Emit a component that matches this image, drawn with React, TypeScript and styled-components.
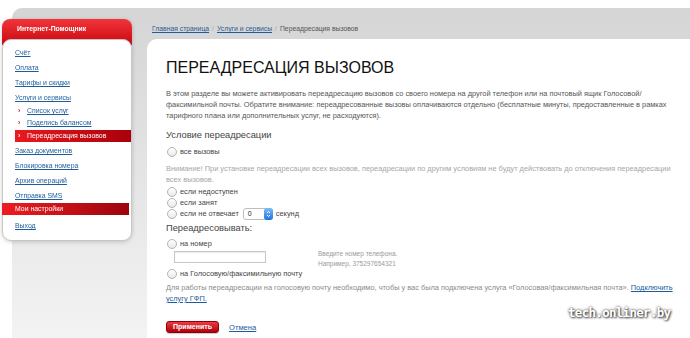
import styled, { createGlobalStyle } from "styled-components";

const GlobalStyle = createGlobalStyle`
  html, body {
    margin: 0;
    padding: 0;
    background: #fff;
  }
  body {
    font-family: "Liberation Sans", Arial, Helvetica, sans-serif;
  }
  * {
    box-sizing: border-box;
  }
`;

const Page = styled.div`
  position: relative;
  width: 690px;
  height: 338px;
  overflow: hidden;
  padding-top: 8px;
  background: #fff;
`;

const Frame = styled.div`
  display: flex;
  align-items: flex-start;
  height: 330px;
  margin-left: 12px;
  border-top-left-radius: 10px;
  background: linear-gradient(#d5d5d5, #e2e2e2 140px, #f3f3f3);
`;

const Sidebar = styled.nav`
  flex: none;
  width: 130px;
  margin: 11px 0 0 -10px;
  filter: drop-shadow(0 1px 2px rgba(0, 0, 0, 0.18));
`;

const SideHead = styled.div`
  height: 26px;
  padding: 5px 0 0 15px;
  border-radius: 8px 8px 0 0;
  background: linear-gradient(#f2353b, #c9070f);
  color: #fff;
  font-size: 6.8px;
  font-weight: bold;
  line-height: 10px;
`;

const SideBody = styled.ul`
  list-style: none;
  margin: -6px 0 0;
  padding: 5px 0 7px;
  background: #fff;
  border: 1px solid #c6c6c6;
  border-radius: 9px;
`;

const SideLink = styled.li<{ $sub?: boolean }>`
  height: ${(p) => (p.$sub ? 12 : 15)}px;
  padding-left: ${(p) => (p.$sub ? 15 : 12)}px;
  font-size: 6.9px;
  line-height: ${(p) => (p.$sub ? 12 : 15)}px;
  color: #1d5d9b;
  white-space: nowrap;
  span {
    text-decoration: underline;
  }
`;

const Marker = styled.i<{ $light?: boolean }>`
  display: inline-block;
  width: 9px;
  font-style: normal;
  font-weight: bold;
  color: ${(p) => (p.$light ? "#fff" : "#d4121a")};
`;

const ActiveSub = styled.li`
  height: 12px;
  margin: 1px 0 1px 12px;
  padding-left: 3px;
  background: linear-gradient(to right, #ea1a20, #a8000a);
  color: #fff;
  font-size: 6.9px;
  line-height: 12px;
  white-space: nowrap;
`;

const SectionBar = styled.li`
  height: 12px;
  margin: 0 2px 3px -1px;
  padding-left: 13px;
  background: linear-gradient(to right, #ee1c22, #9c040c);
  color: #fff;
  font-size: 6.9px;
  line-height: 12px;
`;

const Main = styled.main`
  flex: 1;
  display: flex;
  flex-direction: column;
  height: 100%;
  margin-left: 15px;
`;

const Crumbs = styled.div`
  padding: 16px 0 5px 5px;
  font-size: 6.8px;
  line-height: 10px;
  color: #555;
`;

const Link = styled.a`
  color: #1d5d9b;
  text-decoration: underline;
  cursor: pointer;
`;

const Sep = styled.span`
  color: #aaa;
  margin: 0 3px;
`;

const Panel = styled.section`
  flex: 1;
  padding: 19px 0 0 19px;
  overflow: hidden;
  background: #fff;
  border-top-left-radius: 10px;
`;

const Title = styled.h1`
  margin: 0 0 10px;
  font-size: 16px;
  font-weight: normal;
  line-height: 20px;
  color: #111;
`;

const Text = styled.p<{ $tone?: string; $mt?: number }>`
  margin: ${(p) => p.$mt ?? 0}px 0 0;
  font-size: 7.4px;
  line-height: 11px;
  color: ${(p) => p.$tone ?? "#555"};
  white-space: nowrap;
`;

const Heading = styled.h2<{ $mt: number }>`
  margin: ${(p) => p.$mt}px 0 0;
  font-size: 9.3px;
  font-weight: normal;
  line-height: 13px;
  color: #444;
`;

const RadioRow = styled.label<{ $mt?: number }>`
  display: flex;
  align-items: center;
  gap: 3px;
  height: 11px;
  margin-top: ${(p) => p.$mt ?? 0}px;
  font-size: 7.4px;
  color: #444;
  white-space: nowrap;
`;

const Radio = styled.span`
  flex: none;
  width: 10px;
  height: 10px;
  margin-left: 1px;
  border: 1px solid #b4b4b4;
  border-radius: 50%;
  background: linear-gradient(#fff, #e9e9e9);
`;

const Select = styled.span`
  display: inline-flex;
  height: 12px;
  margin-left: 1px;
  border: 1px solid #bdbdbd;
  border-radius: 3px;
  background: #fff;
`;

const SelectValue = styled.span`
  width: 20px;
  padding-left: 4px;
  font-size: 7px;
  line-height: 10px;
  color: #222;
`;

const Stepper = styled.span`
  display: flex;
  align-items: center;
  justify-content: center;
  width: 9px;
  margin: -1px -1px -1px 0;
  border-radius: 3px;
  background: linear-gradient(#7dbcfb, #1d73e4);
`;

const InputRow = styled.div`
  display: flex;
  align-items: flex-start;
  height: 18px;
`;

const Field = styled.input`
  width: 92px;
  height: 12px;
  margin: 1.5px 0 0 8px;
  padding: 0;
  border: 1px solid #c8c8c8;
  box-shadow: inset 0 1px 1px rgba(0, 0, 0, 0.08);
  outline: none;
`;

const Hint = styled.div`
  margin-left: 52px;
  font-size: 6.5px;
  line-height: 10px;
  color: #9a9a9a;
`;

const Actions = styled.div`
  display: flex;
  align-items: center;
  gap: 10px;
  margin-top: 17px;
`;

const Button = styled.button`
  width: 53px;
  height: 12px;
  padding: 0;
  border: 1px solid #8e0008;
  border-radius: 3px;
  background: linear-gradient(#ec3b43, #b0000a);
  box-shadow: 0 1px 1px rgba(0, 0, 0, 0.2);
  color: #fff;
  font-family: inherit;
  font-size: 7px;
  font-weight: bold;
  line-height: 10px;
`;

const CancelLink = styled(Link)`
  font-size: 7.6px;
`;

const Watermark = styled.div`
  position: absolute;
  left: 568px;
  top: 305px;
  font-family: "DejaVu Sans Mono", monospace;
  font-size: 12.5px;
  font-weight: bold;
  letter-spacing: -0.7px;
  color: #fff;
  text-shadow: 0 0 3px rgba(0, 0, 0, 0.85), 1px 1px 2px rgba(0, 0, 0, 0.6);
`;

const menu = ["Счёт", "Оплата", "Тарифы и скидки", "Услуги и сервисы"];
const menuAfter = ["Заказ документов", "Блокировка номера", "Архив операций", "Отправка SMS"];

export default function App() {
  return (
    <Page>
      <GlobalStyle />
      <Frame>
        <Sidebar>
          <SideHead>Интернет-Помощник</SideHead>
          <SideBody>
            {menu.map((item) => (
              <SideLink key={item}>
                <span>{item}</span>
              </SideLink>
            ))}
            <SideLink $sub>
              <Marker>›</Marker>
              <span>Список услуг</span>
            </SideLink>
            <SideLink $sub>
              <Marker>›</Marker>
              <span>Поделись балансом</span>
            </SideLink>
            <ActiveSub>
              <Marker $light>›</Marker>
              Переадресация вызовов
            </ActiveSub>
            {menuAfter.map((item) => (
              <SideLink key={item}>
                <span>{item}</span>
              </SideLink>
            ))}
            <SectionBar>Мои настройки</SectionBar>
            <SideLink>
              <span>Выход</span>
            </SideLink>
          </SideBody>
        </Sidebar>

        <Main>
          <Crumbs>
            <Link>Главная страница</Link>
            <Sep>/</Sep>
            <Link>Услуги и сервисы</Link>
            <Sep>/</Sep>
            Переадресация вызовов
          </Crumbs>
          <Panel>
            <Title>ПЕРЕАДРЕСАЦИЯ ВЫЗОВОВ</Title>
            <Text>
              В этом разделе вы можете активировать переадресацию вызовов со своего номера на другой телефон или на почтовый ящик Голосовой/
              <br />
              факсимильной почты. Обратите внимание: переадресованные вызовы оплачиваются отдельно (бесплатные минуты, предоставленные в рамках
              <br />
              тарифного плана или дополнительных услуг, не расходуются).
            </Text>

            <Heading $mt={8}>Условие переадресации</Heading>
            <RadioRow $mt={4}>
              <Radio />
              все вызовы
            </RadioRow>
            <Text $tone="#a6a6a6" $mt={6}>
              Внимание! При установке переадресации всех вызовов, переадресации по другим условиям не будут действовать до отключения переадресации
              <br />
              всех вызовов.
            </Text>
            <RadioRow $mt={1}>
              <Radio />
              если недоступен
            </RadioRow>
            <RadioRow>
              <Radio />
              если занят
            </RadioRow>
            <RadioRow>
              <Radio />
              если не отвечает
              <Select>
                <SelectValue>0</SelectValue>
                <Stepper>
                  <svg width="5" height="8" viewBox="0 0 5 8">
                    <path d="M1 3 L2.5 1.5 L4 3 M1 5 L2.5 6.5 L4 5" stroke="#fff" strokeWidth="1" fill="none" />
                  </svg>
                </Stepper>
              </Select>
              секунд
            </RadioRow>

            <Heading $mt={3}>Переадресовывать:</Heading>
            <RadioRow $mt={3}>
              <Radio />
              на номер
            </RadioRow>
            <InputRow>
              <Field defaultValue="" />
              <Hint>
                Введите номер телефона.
                <br />
                Например, 375297654321
              </Hint>
            </InputRow>
            <RadioRow $mt={1}>
              <Radio />
              на Голосовую/факсимильную почту
            </RadioRow>
            <Text $tone="#8a8a8a" $mt={3}>
              Для работы переадресации на голосовую почту необходимо, чтобы у вас была подключена услуга «Голосовая/факсимильная почта». <Link>Подключить</Link>
              <br />
              <Link>услугу ГФП.</Link>
            </Text>

            <Actions>
              <Button>Применить</Button>
              <CancelLink>Отмена</CancelLink>
            </Actions>
          </Panel>
        </Main>
      </Frame>
      <Watermark>tech.onliner.by</Watermark>
    </Page>
  );
}
